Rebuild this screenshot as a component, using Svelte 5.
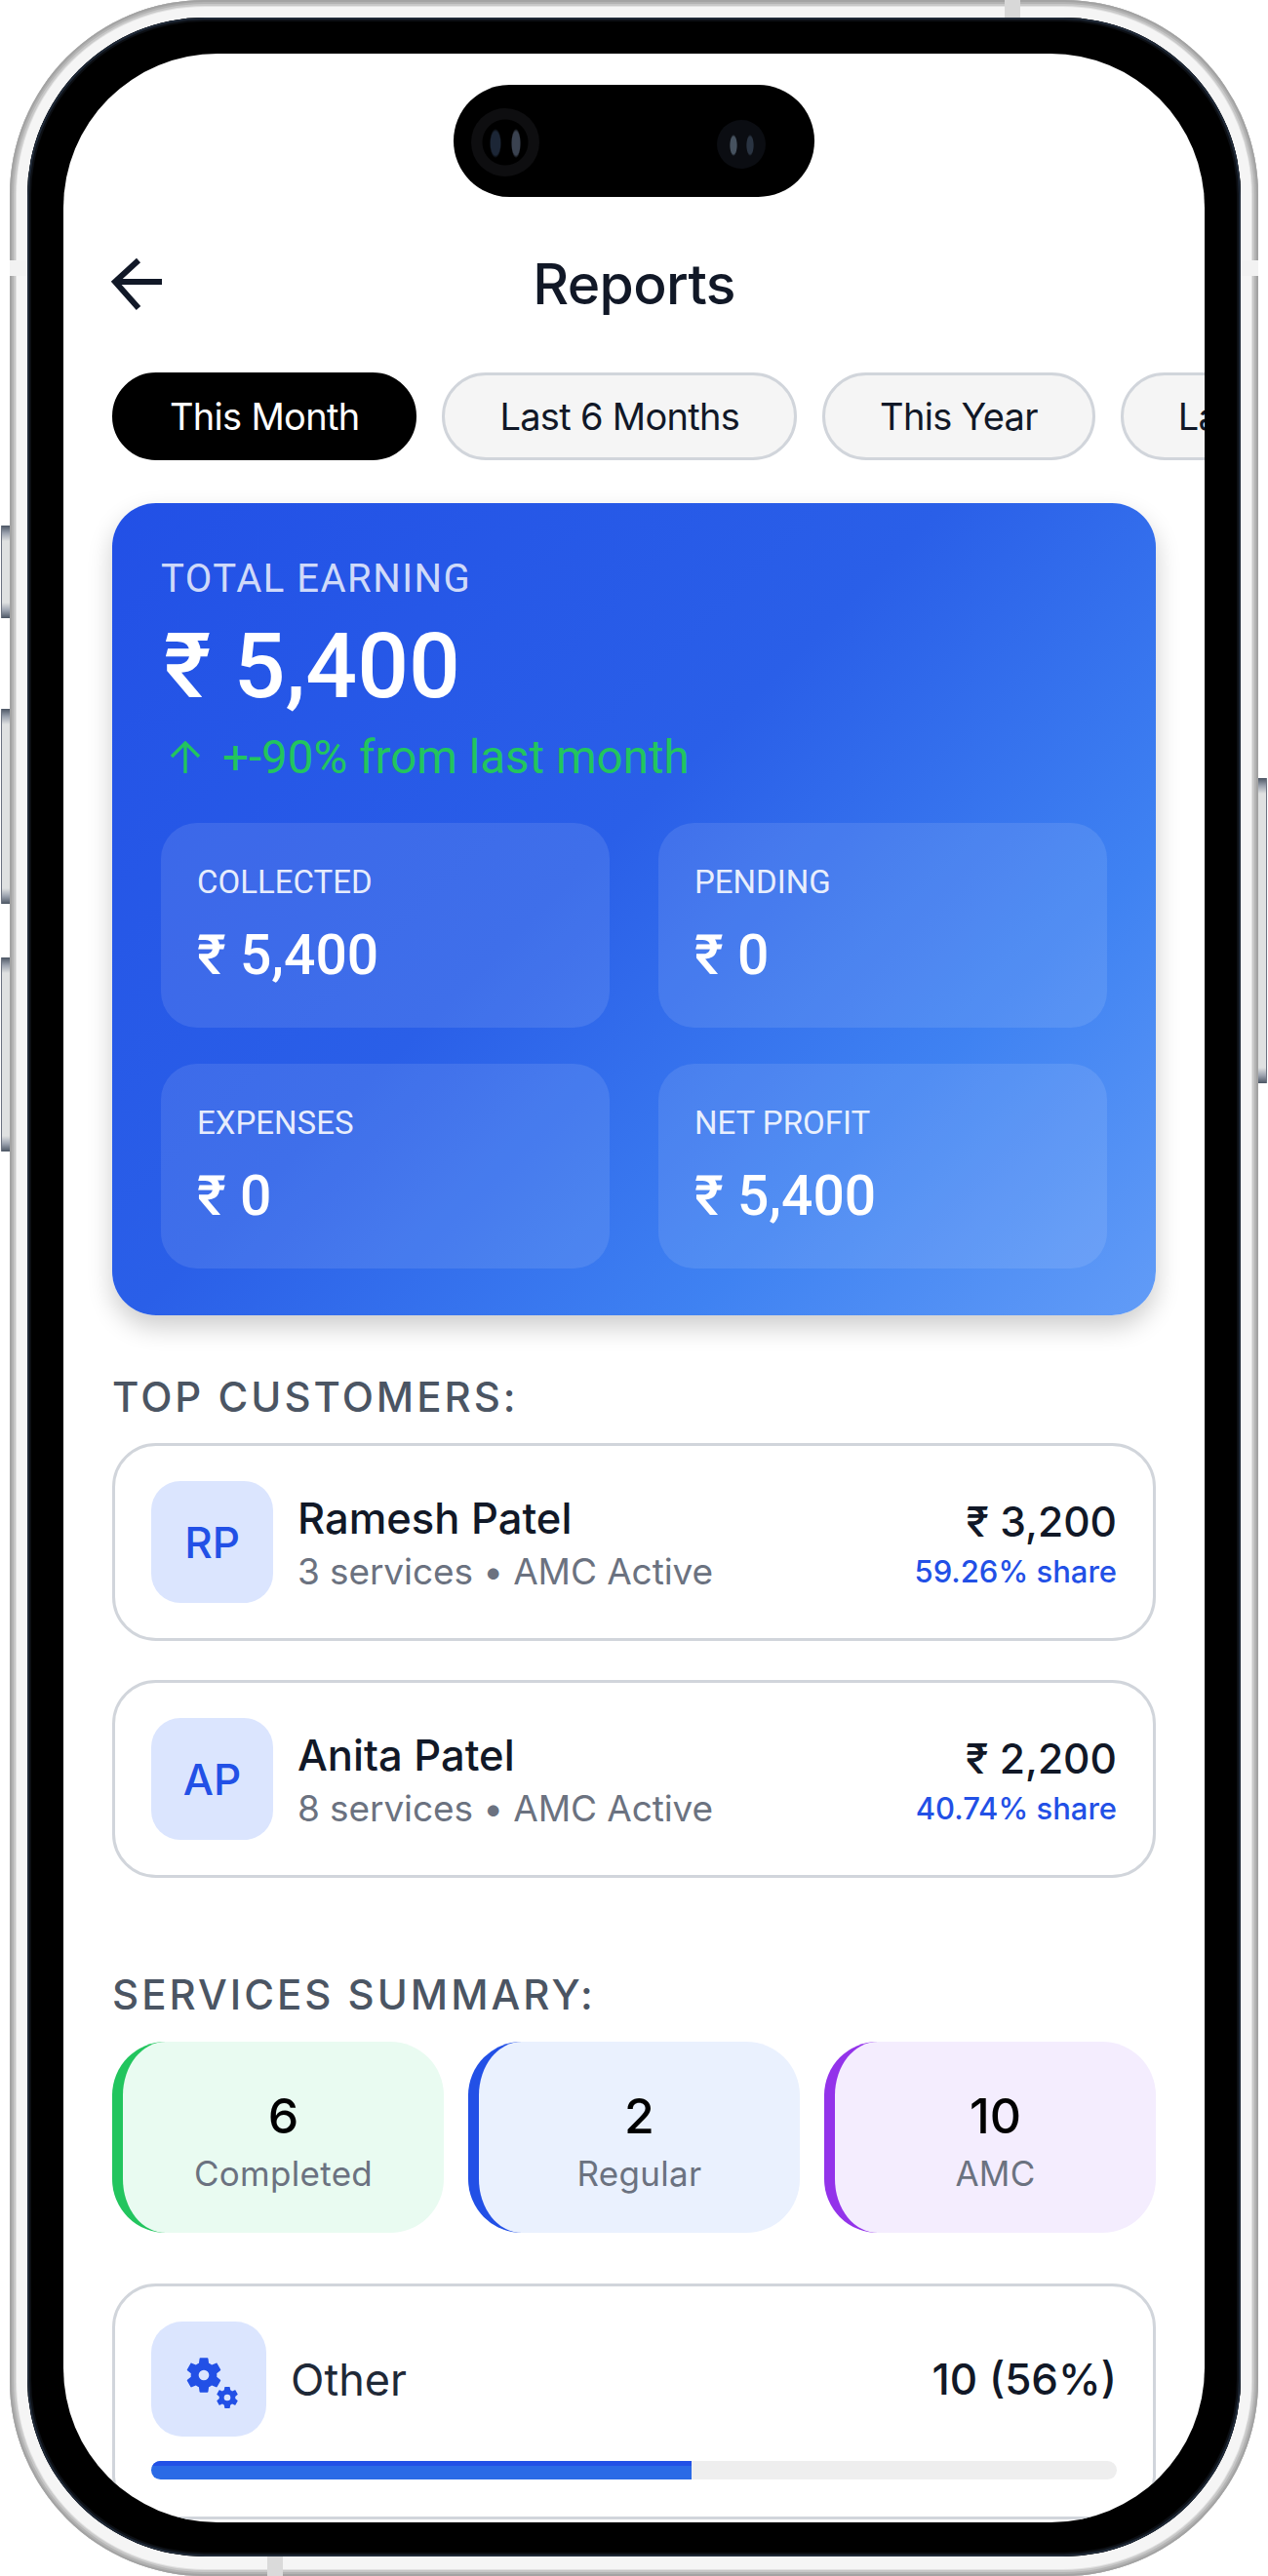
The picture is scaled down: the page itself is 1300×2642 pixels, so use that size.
<script lang="ts">
  const periods = ['This Month', 'Last 6 Months', 'This Year', 'Last Year'];
  const stats = [
    { label: 'COLLECTED', value: '₹ 5,400' },
    { label: 'PENDING', value: '₹ 0' },
    { label: 'EXPENSES', value: '₹ 0' },
    { label: 'NET PROFIT', value: '₹ 5,400' }
  ];
  const customers = [
    { initials: 'RP', name: 'Ramesh Patel', meta: '3 services • AMC Active', amount: '₹ 3,200', share: '59.26% share' },
    { initials: 'AP', name: 'Anita Patel', meta: '8 services • AMC Active', amount: '₹ 2,200', share: '40.74% share' }
  ];
  const summary = [
    { count: 6, label: 'Completed', kind: 'green' },
    { count: 2, label: 'Regular', kind: 'blue' },
    { count: 10, label: 'AMC', kind: 'purple' }
  ];
  const gear =
    'M19.14 12.94c.04-.3.06-.61.06-.94 0-.32-.02-.64-.07-.94l2.03-1.58c.18-.14.23-.41.12-.61l-1.92-3.32c-.12-.22-.37-.29-.59-.22l-2.39.96c-.5-.38-1.03-.7-1.62-.94l-.36-2.54c-.04-.24-.24-.41-.48-.41h-3.84c-.24 0-.43.17-.47.41l-.36 2.54c-.59.24-1.13.57-1.62.94l-2.39-.96c-.22-.08-.47 0-.59.22L2.74 8.87c-.12.21-.08.47.12.61l2.03 1.58c-.05.3-.09.63-.09.94s.02.64.07.94l-2.03 1.58c-.18.14-.23.41-.12.61l1.92 3.32c.12.22.37.29.59.22l2.39-.96c.5.38 1.03.7 1.62.94l.36 2.54c.05.24.24.41.48.41h3.84c.24 0 .44-.17.47-.41l.36-2.54c.59-.24 1.13-.56 1.62-.94l2.39.96c.22.08.47 0 .59-.22l1.92-3.32c.12-.22.07-.47-.12-.61l-2.01-1.58zM12 14.9a2.9 2.9 0 1 1 0-5.8 2.9 2.9 0 0 1 0 5.8z';
</script>

<div class="page">
  <div class="frame">
    <span class="side vol-a"></span>
    <span class="side vol-b"></span>
    <span class="side vol-c"></span>
    <span class="side power"></span>
    <span class="band band-left"></span>
    <span class="band band-right"></span>
    <span class="band band-top"></span>
    <span class="band band-bottom"></span>

    <div class="bezel">
      <div class="screen">
        <div class="island">
          <span class="lens big"></span>
          <span class="lens small"></span>
        </div>

        <header class="topbar">
          <svg class="back" viewBox="0 0 56 54" width="56" height="54" aria-hidden="true">
            <path d="M53 25H6M29 3 5 25l0 0 24 27" fill="none" stroke="#111827" stroke-width="6" />
          </svg>
          <h1>Reports</h1>
        </header>

        <div class="periods">
          {#each periods as period, i}
            <button class="pill" class:active={i === 0}>{period}</button>
          {/each}
        </div>

        <section class="earning">
          <div class="earning-label">TOTAL EARNING</div>
          <div class="earning-value">₹ 5,400</div>
          <div class="trend">
            <svg viewBox="0 0 34 34" width="34" height="34" aria-hidden="true">
              <path d="M17 33V3M3 16 17 2l14 14" fill="none" stroke="#22c55e" stroke-width="3.4" />
            </svg>
            <span>+-90% from last month</span>
          </div>
          <div class="stats">
            {#each stats as stat}
              <div class="stat">
                <div class="stat-label">{stat.label}</div>
                <div class="stat-value">{stat.value}</div>
              </div>
            {/each}
          </div>
        </section>

        <h2 class="section-title customers-title">TOP CUSTOMERS:</h2>
        <div class="customers">
          {#each customers as c}
            <div class="customer">
              <div class="avatar">{c.initials}</div>
              <div class="who">
                <div class="name">{c.name}</div>
                <div class="meta">{c.meta}</div>
              </div>
              <div class="money">
                <div class="amount">{c.amount}</div>
                <div class="share">{c.share}</div>
              </div>
            </div>
          {/each}
        </div>

        <h2 class="section-title services-title">SERVICES SUMMARY:</h2>
        <div class="summary">
          {#each summary as s}
            <div class="tile {s.kind}">
              <div class="count">{s.count}</div>
              <div class="tile-label">{s.label}</div>
            </div>
          {/each}
        </div>

        <div class="breakdown">
          <div class="breakdown-row">
            <div class="gears">
              <svg viewBox="0 0 118 118" width="118" height="118" aria-hidden="true">
                <path transform="translate(31.8 32.8) scale(1.85)" d={gear} fill="#2250e6" fill-rule="evenodd" />
                <path transform="translate(64.2 64.2) scale(1.15)" d={gear} fill="#2250e6" fill-rule="evenodd" />
              </svg>
            </div>
            <span class="breakdown-name">Other</span>
            <span class="breakdown-count">10 (56%)</span>
          </div>
          <div class="track"><div class="fill" style="width: 56%"></div></div>
        </div>
      </div>
    </div>
  </div>
</div>

<style>
  :global(body) {
    margin: 0;
    background: #fff;
  }
  .page {
    width: 1300px;
    height: 2642px;
    padding: 0 10px;
    box-sizing: border-box;
    font-family: Inter, 'Liberation Sans', sans-serif;
    color: #111827;
  }
  .frame {
    position: relative;
    height: 100%;
    box-sizing: border-box;
    padding: 18px 18px 20px;
    border-radius: 200px;
    background: #f5f5f5;
    box-shadow:
      inset 0 0 0 2px #a3a3a3,
      inset 0 0 0 4px #b3b3b3,
      inset 0 0 0 6px #c8c8c8,
      inset 0 0 0 7px #e0e0e0;
  }
  .side {
    position: absolute;
    width: 9px;
    background: linear-gradient(#4b5563, #9ca3af 8px, #dfe1e1 16px, #dfe1e1 calc(100% - 16px), #9ca3af calc(100% - 8px), #4b5563);
    box-shadow: inset 1px 0 0 #6b7280;
  }
  .vol-a { left: -9px; top: 539px; height: 95px; }
  .vol-b { left: -9px; top: 727px; height: 200px; }
  .vol-c { left: -9px; top: 982px; height: 199px; }
  .power { right: -9px; top: 798px; height: 313px; box-shadow: inset -1px 0 0 #6b7280; }

  /* antenna lines cut through the metal edge */
  .band {
    position: absolute;
    background: #f2f2f2;
  }
  .band-left { left: 0; top: 267px; width: 18px; height: 16px; }
  .band-right { right: 0; top: 267px; width: 18px; height: 16px; }
  .band-top { left: 1020px; top: 0; width: 16px; height: 18px; background: #d8d8d8; }
  .band-bottom { left: 264px; bottom: 0; width: 16px; height: 20px; background: #dadada; }

  .bezel {
    height: 100%;
    box-sizing: border-box;
    padding: 37px 37px 35px;
    border-radius: 182px;
    background: #000;
    box-shadow: inset 0 0 0 2px #1f2937, inset 0 0 0 4px #0c0f14;
  }
  .screen {
    position: relative;
    height: 100%;
    border-radius: 158px;
    background: #fff;
    overflow: hidden;
    display: flex;
    flex-direction: column;
    padding-top: 196px;
    box-sizing: border-box;
  }
  .island {
    position: absolute;
    left: 400px;
    top: 32px;
    width: 370px;
    height: 115px;
    border-radius: 58px;
    background: #000;
  }
  .lens {
    position: absolute;
    border-radius: 50%;
  }
  .lens.big {
    left: 18px;
    top: 24px;
    width: 70px;
    height: 70px;
    background:
      radial-gradient(ellipse 6px 15px at 25px 36px, #1c2636 80%, transparent),
      radial-gradient(ellipse 5px 15px at 46px 36px, #3a4250 80%, transparent),
      radial-gradient(circle, #000 0 23px, #0e0e10 24px);
  }
  .lens.small {
    left: 270px;
    top: 36px;
    width: 50px;
    height: 50px;
    background:
      radial-gradient(ellipse 4px 11px at 17px 26px, #46525f 80%, transparent),
      radial-gradient(ellipse 4px 11px at 34px 26px, #2a3442 80%, transparent),
      #0b0d12;
  }

  .topbar {
    position: relative;
    height: 80px;
    margin: 0 50px;
    display: flex;
    align-items: center;
    justify-content: center;
  }
  .back {
    position: absolute;
    left: -2px;
    top: 13px;
  }
  h1 {
    margin: 0;
    font-size: 57px;
    font-weight: 500;
    letter-spacing: -0.6px;
    color: #111827;
  }

  .periods {
    display: flex;
    gap: 26px;
    margin-top: 51px;
    padding-left: 50px;
    overflow: hidden;
    flex-shrink: 0;
  }
  .pill {
    flex-shrink: 0;
    height: 90px;
    padding: 0 56px;
    border: 3px solid #d1d5db;
    border-radius: 45px;
    background: #f5f5f5;
    color: #111827;
    font-family: inherit;
    font-size: 38px;
    font-weight: 400;
    letter-spacing: -0.7px;
  }
  .pill.active {
    background: #000;
    border-color: #000;
    color: #fff;
  }

  .earning {
    margin: 44px 50px 0;
    height: 833px;
    box-sizing: border-box;
    padding: 55px 50px 0;
    border-radius: 45px;
    background: linear-gradient(135deg, #2250e6 0%, #2a5fe8 45%, #3f82f2 75%, #629cf7 100%);
    box-shadow: 0 12px 26px rgba(0, 0, 0, 0.2);
    color: #fff;
    font-family: Roboto, sans-serif;
    flex-shrink: 0;
  }
  .earning-label {
    font-size: 40px;
    line-height: 46px;
    letter-spacing: 1.5px;
    color: rgba(255, 255, 255, 0.8);
  }
  .earning-value {
    margin-top: 17px;
    padding-left: 3px;
    font-size: 93px;
    line-height: 100px;
    font-weight: 500;
  }
  .trend {
    display: flex;
    align-items: center;
    gap: 21px;
    margin-top: 16px;
    padding-left: 8px;
    font-size: 47.5px;
    line-height: 54px;
    font-weight: 400;
    color: #22c55e;
  }
  .stats {
    display: grid;
    grid-template-columns: 460px 460px;
    grid-auto-rows: 210px;
    gap: 37px 50px;
    margin-top: 40px;
  }
  .stat {
    padding: 42px 37px 0;
    border-radius: 37px;
    background: rgba(255, 255, 255, 0.1);
  }
  .stat-label {
    font-size: 33px;
    line-height: 38px;
    color: rgba(255, 255, 255, 0.9);
  }
  .stat-value {
    margin-top: 24px;
    font-size: 57px;
    line-height: 64px;
    font-weight: 500;
  }

  .section-title {
    margin: 0 50px;
    font-size: 42px;
    line-height: 50px;
    font-weight: 500;
    letter-spacing: 3px;
    color: #4b5563;
    flex-shrink: 0;
  }
  .customers-title { margin-top: 59px; }
  .services-title { margin-top: 95px; }

  .customers {
    display: flex;
    flex-direction: column;
    gap: 40px;
    margin: 22px 50px 0;
    flex-shrink: 0;
  }
  .customer {
    display: flex;
    align-items: center;
    height: 203px;
    box-sizing: border-box;
    padding: 0 37px;
    border: 3px solid #d1d5db;
    border-radius: 45px;
  }
  .avatar {
    width: 125px;
    height: 125px;
    display: flex;
    align-items: center;
    justify-content: center;
    border-radius: 30px;
    background: #dbe5fe;
    color: #2250e6;
    font-size: 44px;
    font-weight: 500;
  }
  .who {
    flex: 1;
    margin-left: 25px;
    padding-top: 3px;
  }
  .name {
    font-size: 43.5px;
    line-height: 50px;
    font-weight: 500;
  }
  .meta {
    margin-top: 7px;
    font-size: 37px;
    line-height: 46px;
    letter-spacing: -0.1px;
    color: #6b7280;
  }
  .money {
    text-align: right;
    padding-top: 3px;
  }
  .amount {
    font-size: 42.5px;
    line-height: 52px;
    font-weight: 500;
  }
  .share {
    margin-top: 5px;
    font-size: 31px;
    line-height: 40px;
    font-weight: 500;
    color: #2250e6;
  }

  .summary {
    display: grid;
    grid-template-columns: repeat(3, 340px);
    gap: 25px;
    margin: 23px 50px 0;
    flex-shrink: 0;
  }
  .tile {
    height: 196px;
    box-sizing: border-box;
    display: flex;
    flex-direction: column;
    align-items: center;
    padding-top: 46px;
    border-left: 11px solid;
    border-radius: 55px;
  }
  .tile.green { background: #e9fbf1; border-color: #22c55e; }
  .tile.blue { background: #eaf1fe; border-color: #2250e6; }
  .tile.purple { background: #f4edfe; border-color: #9333ea; }
  .count {
    font-size: 50px;
    line-height: 60px;
    font-weight: 500;
    color: #000;
  }
  .tile-label {
    margin-top: 7px;
    font-size: 35px;
    line-height: 44px;
    letter-spacing: 0.3px;
    color: #6b7280;
  }

  .breakdown {
    margin: 52px 50px 0;
    height: 242px;
    box-sizing: border-box;
    padding: 36px 37px 0;
    border: 3px solid #d1d5db;
    border-radius: 45px;
    flex-shrink: 0;
  }
  .breakdown-row {
    display: flex;
    align-items: center;
  }
  .gears {
    width: 118px;
    height: 118px;
    border-radius: 32px;
    background: #dbe5fe;
  }
  .gears svg { display: block; }
  .breakdown-name {
    flex: 1;
    margin-left: 25px;
    font-size: 45px;
    color: #1f2937;
  }
  .breakdown-count {
    font-size: 44px;
    font-weight: 500;
    color: #111827;
  }
  .track {
    height: 19px;
    margin-top: 25px;
    border-radius: 10px;
    background: #eeeeee;
    overflow: hidden;
  }
  .fill {
    height: 100%;
    background: #2b6ae6;
    box-shadow: inset 0 5px 0 #2250e6;
  }
</style>
